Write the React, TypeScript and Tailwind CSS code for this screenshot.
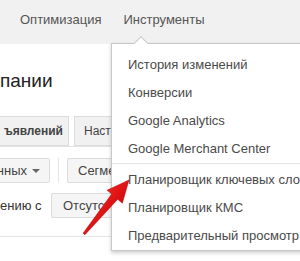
export default function App() {
  const menu1 = ['История изменений', 'Конверсии', 'Google Analytics', 'Google Merchant Center']
  const menu2 = ['Планировщик ключевых слов', 'Планировщик КМС', 'Предварительный просмотр']

  return (
    <div className="relative w-[300px] h-[261px] overflow-hidden bg-white font-['Liberation_Sans',Arial,sans-serif]">
      {/* top nav */}
      <div className="h-[44px] bg-[#f1f1f1] flex items-center pl-[20px] gap-[22px] text-[13px] text-[#555] pb-[4px]">
        <span>Оптимизация</span>
        <span>Инструменты</span>
      </div>

      {/* page content, cut at left edge */}
      <div className="pt-[26px]">
        <div className="text-[19px] leading-[22px] text-[#222]">пании</div>

        <div className="mt-[24px] flex gap-[5px] border-b border-[#e3e3e3]">
          <div className="h-[30px] w-[69px] flex items-center justify-end pr-[5px] bg-[#f1f1f1] border border-[#dcdcdc] border-l-0 text-[12px] font-bold text-[#444] whitespace-nowrap">
            ъявлений
          </div>
          <div className="h-[30px] w-[60px] flex items-center pl-[9px] bg-[#f1f1f1] border border-[#dcdcdc] text-[12px] text-[#444]">
            Настройки
          </div>
        </div>

        <div className="mt-[11px] flex items-center h-[25px]">
          <div className="h-[25px] w-[50px] flex items-center justify-end gap-[5px] pr-[9px] bg-[#f5f5f5] border border-[#dcdcdc] border-l-0 rounded-r-[2px] text-[13px] text-[#444] whitespace-nowrap">
            <span>нных</span>
            <span className="w-0 h-0 border-l-[4px] border-r-[4px] border-t-[4px] border-l-transparent border-r-transparent border-t-[#666]" />
          </div>
          <div className="w-px h-[25px] bg-[#e5e5e5] ml-[8px]" />
          <div className="ml-[8px] h-[25px] w-[60px] flex items-center pl-[10px] bg-[#f5f5f5] border border-[#dcdcdc] rounded-[2px] text-[13px] text-[#444]">
            Сегменты
          </div>
        </div>

        <div className="mt-[10px] flex items-center h-[25px]">
          <span className="text-[13px] text-[#333] w-[51px] whitespace-nowrap">ению с</span>
          <div className="h-[25px] w-[70px] flex items-center pl-[11px] bg-[#f5f5f5] border border-[#dcdcdc] rounded-[2px] text-[13px] text-[#444]">
            Отсутствует
          </div>
        </div>

        <div className="mt-[18px] border-t border-[#e3e3e3]" />
      </div>

      {/* dropdown menu */}
      <div className="absolute left-[111px] top-[43px] w-[210px] h-[208px] bg-white border border-[#c8c8c8] shadow-[0_2px_4px_rgba(0,0,0,0.2)] pt-[7px] text-[13px] text-[#4a4a4a]">
        <div className="absolute -top-[6px] left-[24px] w-[10px] h-[10px] bg-white border-t border-l border-[#c8c8c8] rotate-45" />
        {menu1.map((m) => (
          <div key={m} className="h-[28px] flex items-center pl-[16px] whitespace-nowrap">
            {m}
          </div>
        ))}
        <div className="border-t border-[#e5e5e5] mb-[2px]" />
        {menu2.map((m) => (
          <div key={m} className="h-[28px] flex items-center pl-[16px] whitespace-nowrap">
            {m}
          </div>
        ))}
      </div>

      {/* red arrow */}
      <svg className="absolute left-0 top-0 pointer-events-none" width="300" height="261">
        <defs>
          <linearGradient id="ar" x1="0" y1="0" x2="1" y2="1">
            <stop offset="0" stopColor="#ff4545" />
            <stop offset="0.5" stopColor="#e01414" />
            <stop offset="1" stopColor="#a00000" />
          </linearGradient>
        </defs>
        <polygon
          points="129,180 122.3,203.2 117.7,199.3 84.9,234.8 83.1,233.2 111.7,194.1 107.1,190.2"
          fill="url(#ar)"
          stroke="#b00000"
          strokeWidth="0.5"
          strokeLinejoin="round"
        />
      </svg>
    </div>
  )
}
